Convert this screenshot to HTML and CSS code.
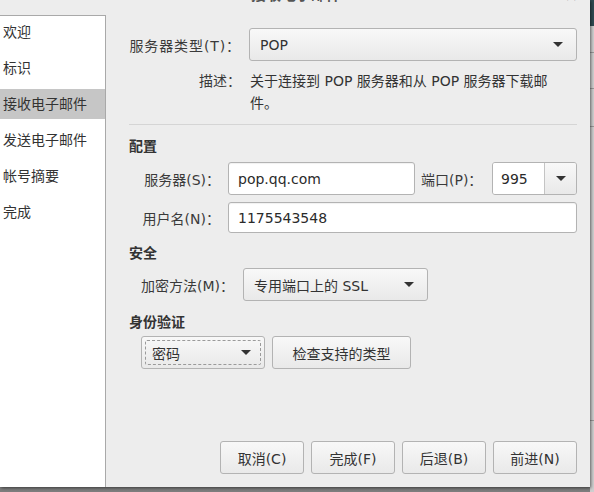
FILE: index.html
```html
<!DOCTYPE html>
<html lang="zh-CN">
<head>
<meta charset="utf-8">
<title>接收电子邮件</title>
<link rel="stylesheet" href="styles.css">
</head>
<body>
<div class="screen">
  <div class="dialog">
    <div class="titlebar">
      <span class="title">接收电子邮件</span>
      <span class="close">×</span>
    </div>
    <div class="body">
      <ul class="sidebar">
        <li>欢迎</li>
        <li>标识</li>
        <li class="selected">接收电子邮件</li>
        <li>发送电子邮件</li>
        <li>帐号摘要</li>
        <li>完成</li>
      </ul>
      <div class="main">
        <div class="topgrid">
          <div class="label type-label">服务器类型(T)：</div>
          <div class="combo wide"><span>POP</span><span class="arrow"></span></div>
          <div class="label desc-label">描述：</div>
          <div class="desc">关于连接到 POP 服务器和从 POP 服务器下载邮<br>件。</div>
        </div>
        <div class="separator"></div>

        <div class="heading h-config">配置</div>
        <div class="configgrid">
          <div class="label">服务器(S)：</div>
          <div class="serverrow">
            <div class="entry server">pop.qq.com</div>
            <div class="label port-label">端口(P)：</div>
            <div class="portcombo"><span class="portval">995</span><span class="portbtn"><span class="arrow"></span></span></div>
          </div>
          <div class="label">用户名(N)：</div>
          <div class="entry user">1175543548</div>
        </div>

        <div class="heading h-sec">安全</div>
        <div class="secrow">
          <div class="label">加密方法(M)：</div>
          <div class="combo enc"><span>专用端口上的 SSL</span><span class="arrow"></span></div>
        </div>

        <div class="heading h-auth">身份验证</div>
        <div class="authrow">
          <div class="combo auth"><span class="focus"><span>密码</span><span class="arrow"></span></span></div>
          <div class="button check">检查支持的类型</div>
        </div>

        <div class="buttons">
          <div class="button action">取消(C)</div>
          <div class="button action">完成(F)</div>
          <div class="button action">后退(B)</div>
          <div class="button action">前进(N)</div>
        </div>
      </div>
    </div>
  </div>
  <div class="rightstrip">
    <div class="teal"></div>
    <div class="line l1"></div>
    <div class="line l2"></div>
    <div class="line l3"></div>
    <div class="line l4"></div>
  </div>
</div>
</body>
</html>
```

FILE: styles.css
```css
* { box-sizing: border-box; }

html, body {
  margin: 0;
  padding: 0;
  background: #8e8e8e;
}

body {
  font-family: "DejaVu Sans", "Noto Sans CJK SC", sans-serif;
  font-size: 14px;
  color: #333;
}

.screen {
  width: 594px;
  height: 492px;
  overflow: hidden;
  display: flex;
  background: linear-gradient(#9a9a9a, #7e7e7e);
}

.dialog {
  width: 590px;
  height: 487px;
  background: #ededed;
  display: flex;
  flex-direction: column;
  box-shadow: 1px 1px 3px rgba(0,0,0,0.55);
  position: relative;
  z-index: 1;
}

.titlebar {
  height: 15px;
  display: flex;
  justify-content: center;
  overflow: hidden;
  position: relative;
}

.title {
  font-weight: bold;
  font-size: 15px;
  color: #555;
  line-height: 20px;
  margin-top: -15px;
  margin-left: 2px;
}

.close {
  position: absolute;
  right: 12px;
  top: -14px;
  font-size: 16px;
  color: #666;
}

.body {
  flex: 1;
  display: flex;
}

.sidebar {
  list-style: none;
  margin: 0;
  padding: 0;
  width: 106px;
  background: #fff;
  border-top: 1px solid #a9a9a9;
  border-right: 1px solid #a9a9a9;
}

.sidebar li {
  height: 30px;
  line-height: 30px;
  margin-bottom: 6px;
  padding-left: 3px;
  color: #333;
  white-space: nowrap;
}

.sidebar li:first-child { margin-top: 1px; }

.sidebar li.selected {
  background: #c6c6c6;
}

.main {
  flex: 1;
  display: flex;
  flex-direction: column;
  padding: 13px 13px 13px 23px;
}

.label {
  white-space: nowrap;
  color: #3a3a3a;
}

.topgrid {
  display: grid;
  grid-template-columns: 112px 1fr;
  column-gap: 8px;
  align-items: center;
}

.topgrid .label { text-align: right; }

.type-label {
  letter-spacing: 0.9px;
}

.desc-label {
  align-self: start;
  margin-top: 9px;
  line-height: 22px;
}

.desc {
  margin-top: 9px;
  line-height: 22px;
  padding-left: 1px;
  color: #333;
}

.combo {
  height: 33px;
  display: flex;
  align-items: center;
  justify-content: space-between;
  padding: 0 13px 0 10px;
  border: 1px solid #b3b3b3;
  border-radius: 3px;
  background: linear-gradient(#f8f8f8, #e9e9e9);
  color: #333;
  white-space: nowrap;
}

.arrow {
  width: 0;
  height: 0;
  border-left: 5px solid transparent;
  border-right: 5px solid transparent;
  border-top: 5px solid #333;
}

.separator {
  height: 1px;
  background: #d5d5d5;
  margin-top: 10px;
}

.heading {
  font-weight: bold;
  line-height: 20px;
  color: #333;
}

.h-config { margin-top: 11px; }
.h-sec { margin-top: 10px; }
.h-auth { margin-top: 11px; }

.configgrid {
  margin-top: 6px;
  display: grid;
  grid-template-columns: 91px 1fr;
  column-gap: 8px;
  row-gap: 7px;
  align-items: center;
}

.configgrid > .label { text-align: right; }

.serverrow {
  display: flex;
  align-items: stretch;
  height: 33px;
}

.entry {
  display: flex;
  align-items: center;
  padding-left: 9px;
  background: #fff;
  border: 1px solid #b3b3b3;
  border-radius: 3px;
  box-shadow: inset 0 1px 1px rgba(0,0,0,0.06);
  color: #2a2a2a;
}

.server { width: 187px; }
.user { height: 31px; }

.port-label {
  display: flex;
  align-items: center;
  margin-left: 6px;
  width: 71px;
}

.portcombo {
  flex: 1;
  display: flex;
  border: 1px solid #b3b3b3;
  border-radius: 3px;
  overflow: hidden;
}

.portval {
  flex: 1;
  display: flex;
  align-items: center;
  padding-left: 8px;
  background: #fff;
  color: #2a2a2a;
}

.portbtn {
  width: 32px;
  display: flex;
  align-items: center;
  justify-content: center;
  border-left: 1px solid #c4c4c4;
  background: linear-gradient(#f8f8f8, #e9e9e9);
}

.secrow {
  margin-top: 5px;
  padding-left: 12px;
  display: flex;
  align-items: center;
  gap: 9px;
}

.enc { width: 185px; }

.authrow {
  margin-top: 4px;
  padding-left: 12px;
  display: flex;
  gap: 7px;
}

.auth {
  width: 124px;
  padding: 3px;
}

.focus {
  flex: 1;
  height: 100%;
  display: flex;
  align-items: center;
  justify-content: space-between;
  padding: 0 9px 0 6px;
  border: 1px dashed #9a9a9a;
  border-radius: 2px;
}

.button {
  height: 33px;
  display: flex;
  align-items: center;
  justify-content: center;
  border: 1px solid #b3b3b3;
  border-radius: 3px;
  background: linear-gradient(#f8f8f8, #e9e9e9);
  color: #333;
  white-space: nowrap;
}

.check { width: 139px; }

.buttons {
  margin-top: auto;
  display: flex;
  justify-content: flex-end;
  gap: 7px;
}

.action { width: 84px; }

.rightstrip {
  flex: 1;
  height: 492px;
  background: #cfcfcf;
  position: relative;
}

.teal {
  height: 26px;
  background: #2f4b52;
}

.line {
  position: absolute;
  left: 0;
  right: 0;
  height: 1px;
  background: #9a9a9a;
}

.l1 { top: 52px; }
.l2 { top: 88px; }
.l3 { top: 126px; }
.l4 { top: 420px; }
```
